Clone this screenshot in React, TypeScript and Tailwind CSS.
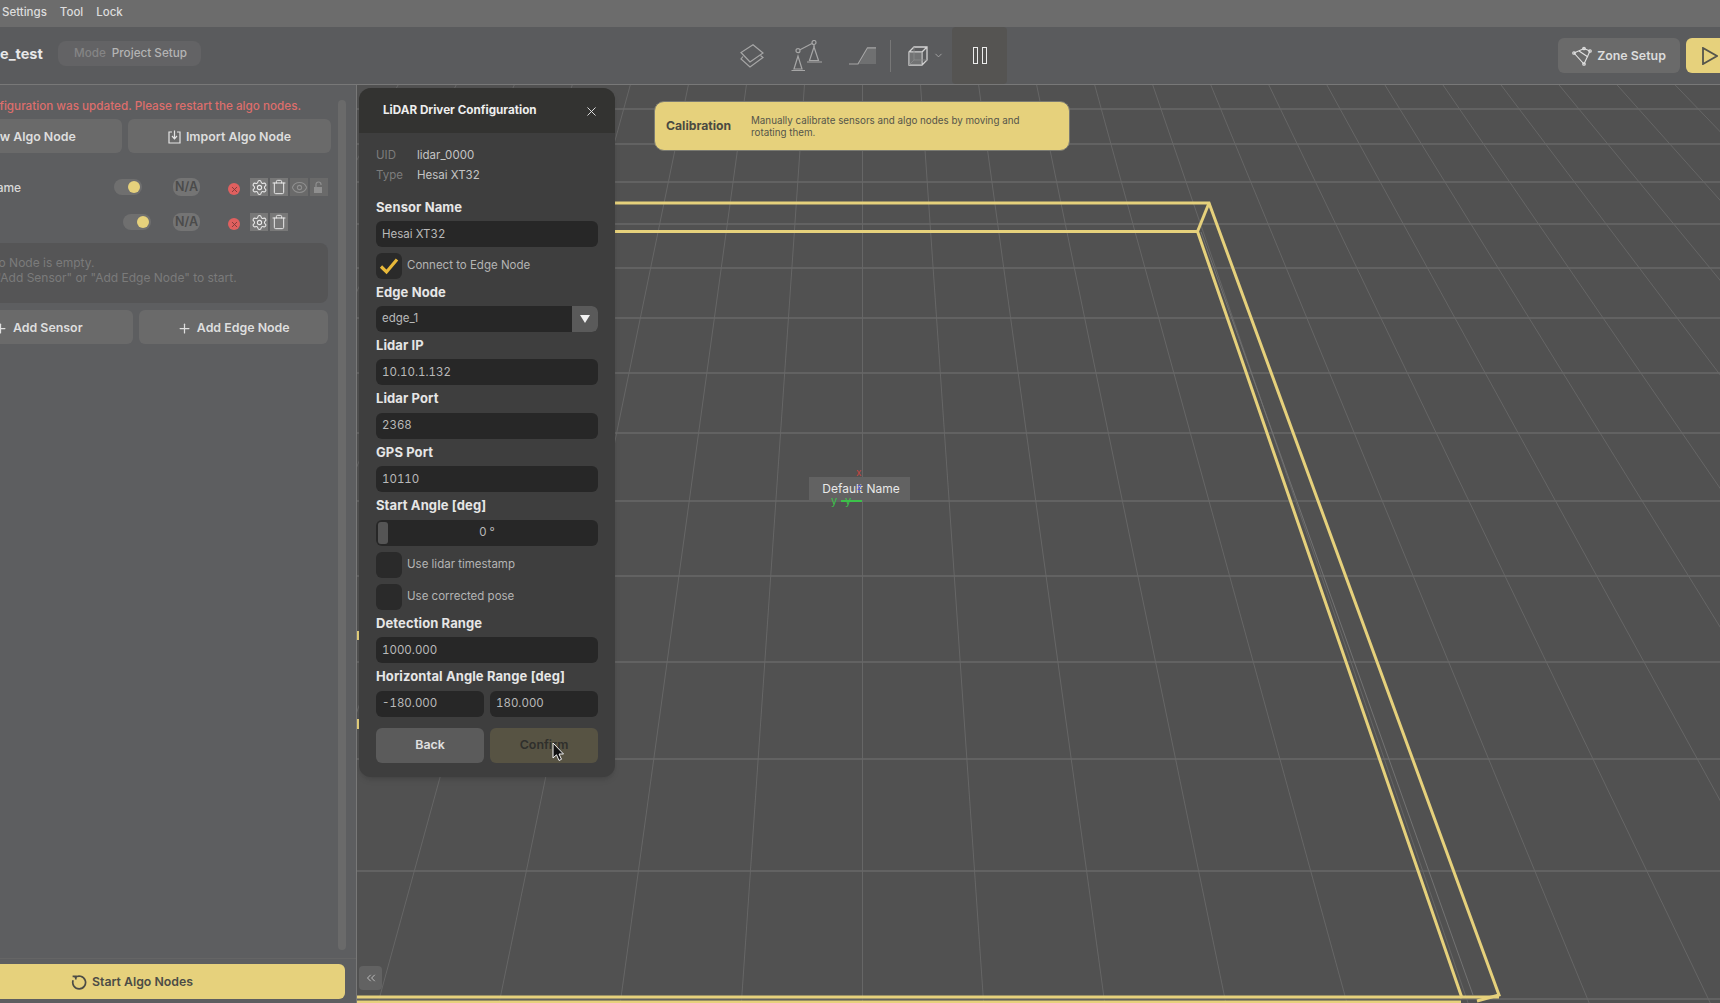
import React from "react";
import { Settings, Trash, Eye, Plus, ChevronDown, X, ChevronsLeft } from "lucide-react";

const hLines = [109, 144, 182, 224, 268, 318, 373, 433, 501, 576, 662, 759, 871, 999];
const radials = Array.from({ length: 61 }, (_, i) => i - 22);
const sx = (k: number, y: number) => 861.5 + k * 0.0687 * (y + 760);

function Viewport() {
  return (
    <svg className="absolute left-0 top-0" width={1364} height={918} viewBox="356 85 1364 918">
      {radials.map((k) => (
        <line key={k} x1={sx(k, 85)} y1={85} x2={sx(k, 1003)} y2={1003} stroke="#666666" strokeWidth={1} />
      ))}
      {hLines.map((y) => (
        <line key={y} x1={356} y1={y} x2={1720} y2={y} stroke="#686868" strokeWidth={1.6} />
      ))}
      <line x1={1200} y1={232} x2={1472} y2={995} stroke="#737373" strokeWidth={1} />
      <g stroke="#e6d17c" strokeWidth={3} fill="none">
        <polyline points="600,203 1208,203 1498,995 1476,1001" />
        <polyline points="600,231.5 1196.5,231.5 1461,998" />
        <line x1={1208} y1={203} x2={1196.5} y2={231.5} />
        <polyline points="356,997 1498,997" strokeWidth={3.2} />
        <line x1={356} y1={1002} x2={1460} y2={1002} />
      </g>
      <line x1={357} y1={631} x2={357} y2={640} stroke="#e6d17c" strokeWidth={2} />
      <line x1={357} y1={719} x2={357} y2={729} stroke="#e6d17c" strokeWidth={2} />
    </svg>
  );
}

function Label({ children, wide }: { children: React.ReactNode; wide?: boolean }) {
  return (
    <div className={`flex items-center text-[13px] font-bold tracking-[0.1px] text-[#e6e6e6] ${wide ? "h-[27.5px]" : "h-[27px]"}`}>
      {children}
    </div>
  );
}

function Field({ value, className = "" }: { value: string; className?: string }) {
  return (
    <div className={`flex h-[26px] items-center rounded-md bg-[#272727] pl-[6px] pt-[1px] text-[11.5px] tabular-nums text-[#b9b9b9] ${className}`}>
      {value}
    </div>
  );
}

function Check({ label, checked, className = "" }: { label: string; checked?: boolean; className?: string }) {
  return (
    <div className={`flex h-[26px] items-center ${className}`}>
      <div className="flex h-[26px] w-[26px] items-center justify-center rounded-md bg-[#2a2a2a]">
        {checked && (
          <svg width="20" height="18" viewBox="0 0 20 18" fill="none">
            <path d="M2 9.5 L7.5 15 L18 2.5" stroke="#e8b93a" strokeWidth="3.2" />
          </svg>
        )}
      </div>
      <span className="ml-[5px] text-[11.5px] text-[#b4b4b4]">{label}</span>
    </div>
  );
}

function ConfigPanel() {
  return (
    <div className="absolute left-[2px] top-[3px] w-[256px] overflow-hidden rounded-[12px] bg-[#3e3e3e] shadow-md">
      <div className="flex h-[45px] items-center justify-between bg-[#333331] pl-[24px] pr-[16px] pt-[1px]">
        <span className="text-[11.7px] font-bold text-[#eeeeee]">LiDAR Driver Configuration</span>
        <X size={15} strokeWidth={1.5} className="text-[#e6e6e6]" />
      </div>
      <div className="px-[17px] pb-[14px] pt-[12px]">
        <div className="mb-[9px] text-[11.5px] leading-[20px]">
          <div className="flex">
            <span className="w-[41px] text-[#7c7c7c]">UID</span>
            <span className="text-[#c4c4c4]">lidar_0000</span>
          </div>
          <div className="flex">
            <span className="w-[41px] text-[#7c7c7c]">Type</span>
            <span className="text-[#c4c4c4]">Hesai XT32</span>
          </div>
        </div>
        <Label>Sensor Name</Label>
        <Field value="Hesai XT32" />
        <Check label="Connect to Edge Node" checked className="mt-[6px]" />
        <Label>Edge Node</Label>
        <div className="flex h-[26px] items-center overflow-hidden rounded-md bg-[#272727] pl-[6px] text-[11.5px] text-[#b9b9b9]">
          <span className="flex-1">edge_1</span>
          <div className="flex h-full w-[26px] items-center justify-center bg-[#5a5a5a]">
            <svg width="10" height="8" viewBox="0 0 10 8">
              <path d="M0 0 H10 L5 8 Z" fill="#f2f2f2" />
            </svg>
          </div>
        </div>
        <Label>Lidar IP</Label>
        <Field value="10.10.1.132" />
        <Label wide>Lidar Port</Label>
        <Field value="2368" />
        <Label wide>GPS Port</Label>
        <Field value="10110" />
        <Label wide>Start Angle [deg]</Label>
        <div className="relative flex h-[26px] items-center justify-center rounded-md bg-[#272727] text-[11.5px] text-[#b9b9b9]">
          <div className="absolute bottom-[2px] left-[2px] top-[2px] w-[10px] rounded-[3px] bg-[#555555]" />
          0 °
        </div>
        <Check label="Use lidar timestamp" className="mt-[6px]" />
        <Check label="Use corrected pose" className="mt-[6px]" />
        <Label wide>Detection Range</Label>
        <Field value="1000.000" />
        <Label wide>Horizontal Angle Range [deg]</Label>
        <div className="flex gap-[6px]">
          <Field value="-180.000" className="flex-1" />
          <Field value="180.000" className="flex-1" />
        </div>
        <div className="mt-[11px] flex gap-[6px]">
          <div className="flex h-[35px] flex-1 items-center justify-center rounded-md bg-[#5b5b5b] text-[12.4px] font-semibold text-[#e0e0e0]">
            Back
          </div>
          <div className="flex h-[35px] flex-1 items-center justify-center rounded-md bg-[#575343] text-[12.4px] font-semibold text-[#2f2f2c]">
            Confirm
          </div>
        </div>
      </div>
    </div>
  );
}

function IconBox({ children, dim }: { children: React.ReactNode; dim?: boolean }) {
  return (
    <div className={`flex h-[18px] w-[18px] items-center justify-center ${dim ? "bg-[#6a6a6a] text-[#8f8f8f]" : "bg-[#787878] text-[#e8e8e8]"}`}>
      {children}
    </div>
  );
}

function Status() {
  return (
    <div className="ml-[28px] mt-1 flex h-[12px] w-[12px] items-center justify-center rounded-full bg-[#e0605f] text-[#7a3a3a]">
      <X size={9} strokeWidth={2.4} />
    </div>
  );
}

function NA({ className = "" }: { className?: string }) {
  return (
    <div className={`flex h-[18px] w-[27px] items-center justify-center rounded-lg bg-[#747474] text-[12.5px] font-semibold text-[#4b4b4b] ${className}`}>
      N/A
    </div>
  );
}

function Knob() {
  return (
    <div className="flex h-[16px] w-[28px] items-center justify-end rounded-full bg-[#6f6f6f] pr-[2px]">
      <div className="h-[12px] w-[12px] rounded-full bg-[#e6d17c]" />
    </div>
  );
}

function Sidebar() {
  return (
    <aside className="flex w-[357px] shrink-0 flex-col overflow-hidden border-r border-[#787878] bg-[#5d5e60]">
      <div className="-ml-[81px] flex min-h-0 flex-1">
        <div className="w-[412px] shrink-0 pt-[12px]">
          <div className="flex h-[22px] items-start justify-end pr-[30px] pt-[1px] text-[11.7px] font-medium text-[#dd6e6c]">
            <span className="whitespace-nowrap">Configuration was updated. Please restart the algo nodes.</span>
          </div>
          <div className="flex gap-[6px]">
            <div className="flex h-[34px] flex-1 items-center justify-center gap-[5px] rounded-md bg-[#6a6a6a] pt-[2px] text-[12.4px] font-semibold text-[#dedede]">
              <Plus size={13} />
              New Algo Node
            </div>
            <div className="flex h-[34px] flex-1 items-center justify-center gap-[5px] rounded-md bg-[#6a6a6a] pt-[2px] text-[12.4px] font-semibold text-[#dedede]">
              <svg width="13" height="14" viewBox="0 0 13 14" fill="none" stroke="#e4e4e4" strokeWidth="1.2">
                <path d="M4 2 H1 V13 H12 V2 H9 M6.5 0.5 V8.5 M4 6 L6.5 8.8 L9 6" />
              </svg>
              Import Algo Node
            </div>
          </div>
          <div className="ml-[24px] w-[385px]">
            <div className="mt-[25px] flex h-[18px] items-center">
              <span className="w-[171px] whitespace-nowrap pt-[1px] text-[12px] font-medium text-[#d8d8d8]">Default Name</span>
              <Knob />
              <NA className="ml-[31px]" />
              <Status />
              <div className="ml-[10px] flex gap-[2px]">
                <IconBox><Settings size={17} strokeWidth={1.5} /></IconBox>
                <IconBox><Trash size={16} strokeWidth={1.5} /></IconBox>
                <IconBox dim><Eye size={17} strokeWidth={1.5} /></IconBox>
                <IconBox dim>
                  <svg width="12" height="13" viewBox="0 0 12 13">
                    <path d="M1 6 H9 V12 H1 Z" fill="#8f8f8f" />
                    <path d="M3 6 V3.5 a2.5 2.5 0 0 1 5 0 V4" stroke="#8f8f8f" strokeWidth="1.2" fill="none" />
                  </svg>
                </IconBox>
              </div>
            </div>
            <div className="mt-[17px] flex h-[18px] items-center">
              <span className="w-[180px]" />
              <Knob />
              <NA className="ml-[22px]" />
              <Status />
              <div className="ml-[10px] flex gap-[2px]">
                <IconBox><Settings size={17} strokeWidth={1.5} /></IconBox>
                <IconBox><Trash size={16} strokeWidth={1.5} /></IconBox>
              </div>
            </div>
            <div className="mt-[12px] flex h-[60px] flex-col justify-center rounded-lg bg-[#555556] pb-[6px] pl-[37px] text-[12px] leading-[15px] text-[#7b7b7b]">
              <div>Algo Node is empty.</div>
              <div className="-ml-[10px]">Use "Add Sensor" or "Add Edge Node" to start.</div>
            </div>
            <div className="mt-[7px] flex gap-[6px]">
              <div className="flex h-[34px] flex-1 items-center justify-center gap-[5px] rounded-md bg-[#6a6a6a] pt-[2px] text-[12.4px] font-semibold text-[#dedede]">
                <Plus size={15} />
                Add Sensor
              </div>
              <div className="flex h-[34px] flex-1 items-center justify-center gap-[5px] rounded-md bg-[#6a6a6a] pt-[2px] text-[12.4px] font-semibold text-[#dedede]">
                <Plus size={15} />
                Add Edge Node
              </div>
            </div>
          </div>
        </div>
        <div className="mb-[8px] ml-[7px] mt-[15px] w-[8px] shrink-0 rounded-full bg-[#6a6a6a]" />
      </div>
      <div className="border-t border-[#656565] pb-[4px] pt-[5px]">
        <div className="-ml-[81px] flex h-[35px] w-[426px] items-center justify-center gap-[5px] rounded-md bg-[#e6d17c] pt-[2px] text-[12.3px] font-semibold text-[#4c4c46]">
          <svg width="16" height="16" viewBox="0 0 15 15" fill="none" stroke="#4c4c46" strokeWidth="1.6">
            <path d="M3.6 2.6 A6 6 0 1 1 2 5" />
            <path d="M1.5 1.2 H4.5 V4.2" />
          </svg>
          Start Algo Nodes
        </div>
      </div>
    </aside>
  );
}

function Toolbar() {
  return (
    <header className="flex h-[58px] shrink-0 items-center border-b border-[#787878] bg-[#5a5b5d]">
      <div className="mb-[4px] flex w-[740px] shrink-0 items-center">
        <span className="w-[58px] text-[14.5px] font-bold text-[#e8e8e8]">e_test</span>
        <div className="flex h-[25px] w-[143px] items-center gap-[6px] rounded-lg bg-[#636365] pl-[16px] text-[11.7px] font-medium">
          <span className="text-[#858585]">Mode</span>
          <span className="text-[#b4b4b4]">Project Setup</span>
        </div>
      </div>
      <svg width="24" height="24" viewBox="0 0 24 24" fill="none" stroke="#a6a6a6" strokeWidth="1.2">
        <path d="M13 0.8 L23 9 L10 18 L1 8.5 Z" />
        <path d="M3 12.5 L1 15 L10 23 L23 13.5 L20.5 11.5" />
      </svg>
      <svg className="ml-[27px]" width="32" height="32" viewBox="0 0 32 32" fill="none" stroke="#a6a6a6" strokeWidth="1.2">
        <circle cx="7" cy="10.7" r="2" />
        <circle cx="23" cy="2.5" r="2" />
        <path d="M9 9.7 L21 3.5 M23 4.5 V7" />
        <path d="M7 16 L3 29 H11 Z M0.5 30.5 H14 M23 7 L18.5 20.5 H27.5 Z M16 22 H31" />
      </svg>
      <svg className="ml-[26px]" width="27" height="18" viewBox="0 0 27 18" fill="none">
        <path d="M10 17 L19 1 H27 V17 Z" fill="#6f7071" />
        <path d="M0 17 H9 L18.5 0.8 H27" stroke="#a6a6a6" strokeWidth="1.2" />
      </svg>
      <div className="ml-[14px] h-[32px] w-px bg-[#777777]" />
      <svg className="ml-[17px]" width="20" height="20" viewBox="0 0 20 20" fill="none" stroke="#d2d2d2" strokeWidth="1.3">
        <path d="M1 6 L6 1 H19 V14 L14 19 H1 Z M1 6 H14 V19 M14 6 L19 1" />
        <path d="M1 19 L6 14 H19 M6 1 V14" stroke="#8c8c8c" strokeWidth="0.8" />
        <path d="M1 6 H14 V19 H1 Z" fill="#8a8b8c" fillOpacity="0.5" stroke="none" />
      </svg>
      <ChevronDown size={11} className="ml-[5px] text-[#a6a6a6]" />
      <div className="ml-[8px] flex h-full w-[55px] items-center justify-center gap-[4px] rounded-[4px] bg-[#555452]">
        <div className="h-[17px] w-[5px] border border-[#ececec]" />
        <div className="h-[17px] w-[5px] border border-[#ececec]" />
      </div>
      <div className="-mr-[16px] ml-auto flex items-center gap-[6px]">
        <div className="flex h-[35px] w-[122px] items-center justify-center gap-[5px] rounded-md bg-[#6a6a6a] pt-[1px] text-[12.4px] font-semibold text-[#dcdcdc]">
          <svg width="20" height="20" viewBox="0 0 20 20" fill="none" stroke="#e0e0e0" strokeWidth="1.1">
            <path d="M2 7 L12 2.5 L18 5 L12 18 Z" />
            <circle cx="2" cy="7" r="1.3" />
            <circle cx="12" cy="2.5" r="1.3" />
            <circle cx="18" cy="5" r="1.3" />
            <circle cx="12" cy="18" r="1.3" />
            <path d="M7 5 L16 11" />
          </svg>
          Zone Setup
        </div>
        <div className="flex h-[35px] w-[50px] items-center rounded-md bg-[#e6d17c] pl-[16px]">
          <svg width="16" height="18" viewBox="0 0 16 18" fill="none" stroke="#55554c" strokeWidth="1.8">
            <path d="M1 1 V17 L15 9 Z" />
          </svg>
        </div>
      </div>
    </header>
  );
}

export default function App() {
  return (
    <div className="flex h-[1003px] w-[1720px] flex-col overflow-hidden bg-[#515151] font-['Inter',sans-serif]">
      <nav className="flex h-[27px] shrink-0 items-center gap-[13px] bg-[#6c6c6c] pb-[1px] pl-[2px] text-[11.5px] font-medium text-[#dddddd]">
        <span>Settings</span>
        <span>Tool</span>
        <span>Lock</span>
      </nav>
      <Toolbar />
      <div className="flex min-h-0 flex-1">
        <Sidebar />
        <main className="relative flex-1 overflow-hidden bg-[#515151]">
          <Viewport />
          <ConfigPanel />
          <div className="absolute left-[297px] top-[16px] flex h-[50px] w-[416px] items-center rounded-[10px] border border-[#7a7a72] bg-[#e6d17c] pl-[11px] pt-[1px]">
            <span className="w-[85px] shrink-0 text-[12.2px] font-bold text-[#4a4a42]">Calibration</span>
            <span className="w-[290px] text-[9.8px] leading-[12px] text-[#55554a]">
              Manually calibrate sensors and algo nodes by moving and rotating them.
            </span>
          </div>
          <div className="absolute left-[452px] top-[392px] flex h-[23px] w-[101px] items-center justify-center bg-[#626262] pl-[3px] text-[12px] text-[#e8e8e8]">
            Default Name
          </div>
          <span className="absolute left-[499px] top-[382px] text-[10px] leading-none text-[#c4453f]">x</span>
          <span className="absolute left-[500px] top-[397px] text-[9px] leading-none text-[#4a52d0]">z</span>
          <span className="absolute left-[474px] top-[411px] text-[11px] leading-none text-[#3cc24a]">y</span>
          <span className="absolute left-[488px] top-[411px] text-[11px] leading-none text-[#3cc24a]">y</span>
          <div className="absolute left-[484px] top-[415px] h-[2px] w-[21px] bg-[#3cc24a]" />
          <div className="absolute bottom-[13px] left-[2px] flex h-[24px] w-[23px] items-center justify-center rounded-[4px] bg-[#626262] text-[#c8c8c8]">
            <ChevronsLeft size={14} strokeWidth={1.5} />
          </div>
          <svg className="absolute left-[195px] top-[657px]" width="14" height="20" viewBox="0 0 14 20">
            <path d="M1 1 V16 L4.5 12.8 L7 18.5 L9.5 17.3 L7 12 L11.5 12 Z" fill="#111111" stroke="#f4f4f4" strokeWidth="1" />
          </svg>
        </main>
      </div>
    </div>
  );
}
